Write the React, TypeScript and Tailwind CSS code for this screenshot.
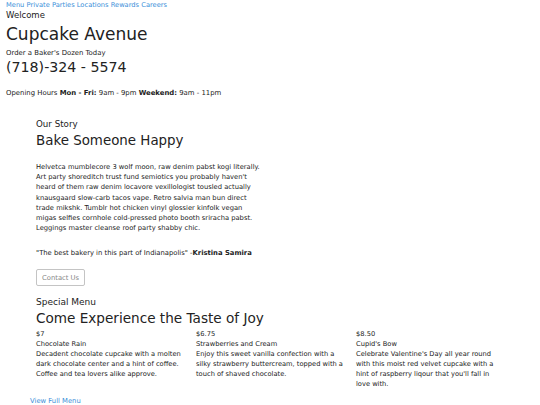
import React from 'react';

const items = [
    {
        price: '$7',
        name: 'Chocolate Rain',
        desc: 'Decadent chocolate cupcake with a molten dark chocolate center and a hint of coffee. Coffee and tea lovers alike approve.',
    },
    {
        price: '$6.75',
        name: 'Strawberries and Cream',
        desc: 'Enjoy this sweet vanilla confection with a silky strawberry buttercream, topped with a touch of shaved chocolate.',
    },
    {
        price: '$8.50',
        name: "Cupid's Bow",
        desc: "Celebrate Valentine's Day all year round with this moist red velvet cupcake with a hint of raspberry liqour that you'll fall in love with.",
    },
];

const navLinks = ['Menu', 'Private Parties', 'Locations', 'Rewards', 'Careers'];

export default function App() {
    return (
        <div className="min-h-[405px] bg-white text-[#222] font-['DejaVu_Sans',sans-serif]">
            {/* Header */}
            <header className="px-[6px]">
                <nav className="text-[6.7px] leading-[10px] text-[#3b8fd9]">
                    {navLinks.map((l, i) => (
                        <React.Fragment key={l}>
                            {i > 0 && ' '}
                            <a href="#">{l}</a>
                        </React.Fragment>
                    ))}
                </nav>
                <p className="text-[8.5px] leading-[11px]">Welcome</p>
                <h1 className="text-[17px] leading-[26px]">Cupcake Avenue</h1>
                <p className="text-[6.9px] leading-[10px] mt-[1px]">Order a Baker's Dozen Today</p>
                <p className="text-[14.2px] leading-[18px]">(718)-324 - 5574</p>
                <p className="text-[6.9px] leading-[10px] mt-[12px]">
                    Opening Hours <b>Mon - Fri:</b> 9am - 9pm <b>Weekend:</b> 9am - 11pm
                </p>
            </header>

            {/* Our Story */}
            <section className="px-[36px] mt-[20px]">
                <p className="text-[8.7px] leading-[12px]">Our Story</p>
                <h2 className="text-[13.4px] leading-[20px] mt-[1px]">Bake Someone Happy</h2>
                <p className="text-[6.75px] leading-[10.2px] w-[225px] mt-[11px]">
                    Helvetca mumblecore 3 wolf moon, raw denim pabst kogi literally. Art party shoreditch trust fund semiotics you probably haven't heard of them raw denim locavore vexillologist tousled actually knausgaard slow-carb tacos vape. Retro salvia man bun direct trade mikshk. Tumblr hot chicken vinyl glossier kinfolk vegan migas selfies cornhole cold-pressed photo booth sriracha pabst. Leggings master cleanse roof party shabby chic.
                </p>
                <p className="text-[6.8px] leading-[11px] mt-[15px]">
                    "The best bakery in this part of Indianapolis" -<b>Kristina Samira</b>
                </p>
                <button className="mt-[10px] border border-[#c4c4c4] rounded-[2px] px-[5px] h-[17px] text-[6.8px] text-[#888]">
                    Contact Us
                </button>
            </section>

            {/* Special Menu */}
            <section className="px-[36px] mt-[9px]">
                <p className="text-[9px] leading-[12px]">Special Menu</p>
                <h2 className="text-[13.6px] leading-[20px]">Come Experience the Taste of Joy</h2>
                <div className="grid grid-cols-3 w-[480px] mt-[1px] text-[6.7px] leading-[10px]">
                    {items.map((it) => (
                        <div key={it.name} className="pr-[13px]">
                            <p>{it.price}</p>
                            <p>{it.name}</p>
                            <p>{it.desc}</p>
                        </div>
                    ))}
                </div>
            </section>

            <a href="#" className="block px-[30px] mt-[7px] text-[6.8px] leading-[10px] text-[#3b8fd9]">
                View Full Menu
            </a>
        </div>
    );
}
